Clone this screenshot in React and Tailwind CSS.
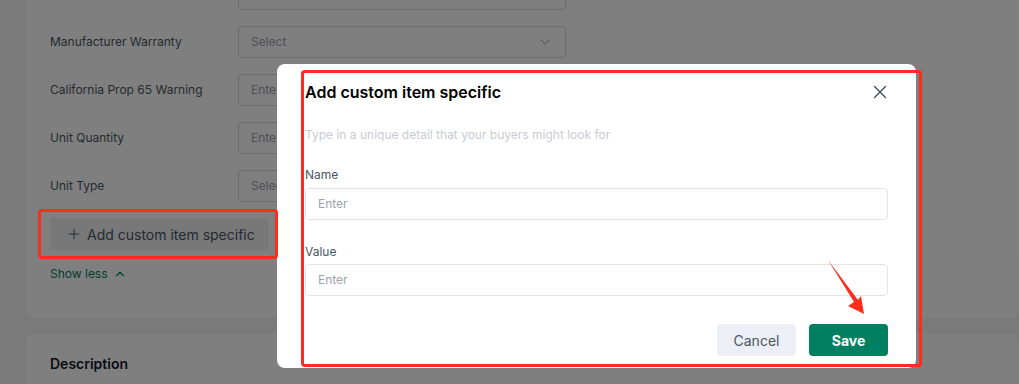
import { X, Plus, ChevronDown, ChevronUp } from "lucide-react";

const rows = [
  { label: "", placeholder: "", select: false },
  { label: "Manufacturer Warranty", placeholder: "Select", select: true },
  { label: "California Prop 65 Warning", placeholder: "Enter", select: false },
  { label: "Unit Quantity", placeholder: "Enter", select: false },
  { label: "Unit Type", placeholder: "Select", select: true },
];

const Row = ({ label, placeholder, select }) => (
  <div className="flex items-center h-8">
    <span className="w-[188px] text-[12px] text-[#4b5563]">{label}</span>
    <div className="w-[328px] h-8 flex items-center justify-between px-3 border border-[#d4d4d8] rounded bg-white">
      <span className="text-[12px] text-[#a1a1aa]">{placeholder}</span>
      {select && <ChevronDown size={16} strokeWidth={1.5} className="text-[#9ca3af]" />}
    </div>
  </div>
);

export default function App() {
  return (
    <div
      className="relative w-[1019px] h-[384px] overflow-hidden bg-[#f4f4f5]"
      style={{ fontFamily: "Inter, 'Noto Sans', sans-serif" }}
    >
      {/* page underneath */}
      <div className="pl-[26px] -mt-[40px] flex flex-col gap-4">
        <div className="bg-white rounded-lg pt-[18px] pl-6 h-[358px]">
          <div className="flex flex-col gap-4">
            {rows.map((r, i) => (
              <Row key={i} {...r} />
            ))}
          </div>
          <button className="mt-4 w-[219px] h-8 flex items-center gap-[5px] pl-[16px] bg-[#f1f1f3] rounded text-[14px] text-[#4b5563]">
            <Plus size={16} strokeWidth={1.5} />
            Add custom item specific
          </button>
          <div className="mt-[15px] flex items-center gap-[5px] text-[12px] text-[#00805f]">
            Show less
            <ChevronUp size={14} strokeWidth={2} />
          </div>
        </div>
        <div className="bg-white rounded-lg pt-[17px] pl-6 h-[100px]">
          <span className="text-[14px] leading-5 font-semibold text-[#111827]">Description</span>
        </div>
      </div>

      {/* overlay */}
      <div className="absolute inset-0 bg-black/50" />

      {/* modal */}
      <div className="absolute left-[277px] top-[64px] w-[639px] bg-white rounded-lg px-7 pt-4 pb-3">
        <div className="flex items-center justify-between h-6">
          <h2 className="text-[16px] font-semibold text-black">Add custom item specific</h2>
          <X size={22} strokeWidth={1.5} className="text-[#4b5563] -mr-[3px]" />
        </div>
        <p className="mt-[21px] leading-5 text-[12px] text-[#c8ccd4]">
          Type in a unique detail that your buyers might look for
        </p>
        <div className="mt-5 leading-5 text-[12px] text-[#4b5563]">Name</div>
        <div className="mt-[3px] h-8 flex items-center px-3 border border-[#e2e4ea] rounded">
          <span className="text-[12px] text-[#9ca3af]">Enter</span>
        </div>
        <div className="mt-[22px] leading-5 text-[12px] text-[#4b5563]">Value</div>
        <div className="mt-[2px] h-8 flex items-center px-3 border border-[#e2e4ea] rounded">
          <span className="text-[12px] text-[#9ca3af]">Enter</span>
        </div>
        <div className="mt-7 flex justify-end gap-[13px]">
          <button className="w-[79px] h-8 rounded bg-[#eceff5] text-[14px] text-[#4b5563]">Cancel</button>
          <button className="w-[79px] h-8 rounded bg-[#008060] text-[14px] font-bold text-white">Save</button>
        </div>
      </div>

      {/* annotations */}
      <div className="absolute left-[38px] top-[209px] w-[240px] h-[50px] border-[3px] border-[#ff2b1c] rounded" />
      <div className="absolute left-[301px] top-[70px] w-[621px] h-[297px] border-[3px] border-[#ff2b1c] rounded" />
      <svg className="absolute left-0 top-0" width="1019" height="384">
        <polygon
          points="828,260 858,300 861,296 864,314 848,306 854,302"
          fill="#ff2b1c"
        />
      </svg>
    </div>
  );
}
